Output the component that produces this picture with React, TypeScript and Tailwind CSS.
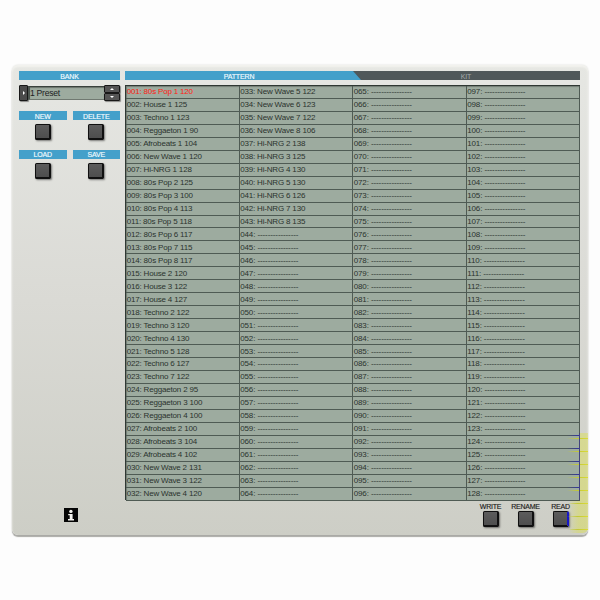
import React from "react";

const EMPTY = "----------------";

const NAMES: string[] = [
  "80s Pop 1 120", "House 1 125", "Techno 1 123", "Reggaeton 1 90", "Afrobeats 1 104", "New Wave 1 120",
  "Hi-NRG 1 128", "80s Pop 2 125", "80s Pop 3 100", "80s Pop 4 113", "80s Pop 5 118", "80s Pop 6 117",
  "80s Pop 7 115", "80s Pop 8 117", "House 2 120", "House 3 122", "House 4 127", "Techno 2 122",
  "Techno 3 120", "Techno 4 130", "Techno 5 128", "Techno 6 127", "Techno 7 122", "Reggaeton 2 95",
  "Reggaeton 3 100", "Reggaeton 4 100", "Afrobeats 2 100", "Afrobeats 3 104", "Afrobeats 4 102",
  "New Wave 2 131", "New Wave 3 122", "New Wave 4 120", "New Wave 5 122", "New Wave 6 123",
  "New Wave 7 122", "New Wave 8 106", "Hi-NRG 2 138", "Hi-NRG 3 125", "Hi-NRG 4 130", "Hi-NRG 5 130",
  "Hi-NRG 6 126", "Hi-NRG 7 130", "Hi-NRG 8 135",
];

function Key({ className = "" }: { className?: string }) {
  return (
    <div
      className={`h-4 w-4 rounded-[1.5px] border border-r-2 border-b-2 border-[#101010] bg-linear-to-b from-[#5c5c5c] to-[#4e4e4e] shadow-[1px_1px_2px_#0007] ${className}`}
    />
  );
}

function Label({ children }: { children: React.ReactNode }) {
  return (
    <div className="flex h-[9px] items-center justify-center bg-[#44a0ca] pt-px text-[7px] leading-none tracking-[-0.15px] text-[#f2fbff] [-webkit-text-stroke:0.15px_#f2fbff]">
      {children}
    </div>
  );
}

function LabeledKey({ label }: { label: string }) {
  return (
    <div className="flex h-[38.5px] flex-col">
      <Label>{label}</Label>
      <Key className="mt-[4px] ml-[15.5px]" />
    </div>
  );
}

function Spinner({ down = false }: { down?: boolean }) {
  return (
    <div className="flex h-[8px] w-[16px] items-center justify-center rounded-[1px] border border-[#181818] bg-[#555] shadow-[1px_1px_1px_#0006]">
      <svg viewBox="0 0 4 2" className={`h-[2px] w-[4px] ${down ? "rotate-180" : ""}`}>
        <path d="M0 2L2 0L4 2Z" fill="#fff" />
      </svg>
    </div>
  );
}

function Sidebar() {
  return (
    <div className="flex w-[101px] flex-col">
      <Label>BANK</Label>
      <div className="mt-[5px] flex h-[16px]">
        <div className="flex h-[16px] w-[9px] items-center justify-center rounded-[1px] border border-[#181818] bg-[#4b4b4b] shadow-[1px_1px_1px_#0006]">
          <svg viewBox="0 0 2 4" className="h-[4px] w-[2px]">
            <path d="M0 0L2 2L0 4Z" fill="#fff" />
          </svg>
        </div>
        <div className="mt-px flex h-[14px] flex-1 items-center border-t border-b border-l-2 border-t-[#39413c] border-b-[#707971] border-l-[#4c554f] bg-[#9dab9f] text-[8.6px] leading-none tracking-[-0.28px] text-[#1c211e] shadow-[inset_0_1px_1px_#0005]">
          <span className="whitespace-pre">1 Preset</span>
        </div>
        <div className="flex flex-col">
          <Spinner />
          <Spinner down />
        </div>
      </div>
      <div className="mt-[10px] grid grid-cols-2 gap-x-[6px]">
        <LabeledKey label="NEW" />
        <LabeledKey label="DELETE" />
        <LabeledKey label="LOAD" />
        <LabeledKey label="SAVE" />
      </div>
      <svg viewBox="0 0 14 14" className="mt-auto mb-[13px] ml-[45px] h-[14px] w-[14px]">
        <rect width="14" height="14" fill="#050505" />
        <circle cx="6.9" cy="3.4" r="1.7" fill="#f4f4f0" />
        <path d="M4.2 6H8.6V11H10V12.4H4V11H5.7V7.2H4.2Z" fill="#f4f4f0" />
      </svg>
    </div>
  );
}

function Tabs() {
  return (
    <div className="flex h-[9px] bg-[#50585a] text-[7px] leading-none tracking-[-0.15px]">
      <div className="flex w-[236px] items-center justify-center bg-[#44a0ca] pt-px pr-[8px] text-[#f2fbff] [-webkit-text-stroke:0.15px_#f2fbff] [clip-path:polygon(0_0,228px_0,236px_100%,0_100%)]">
        PATTERN
      </div>
      <div className="flex flex-1 items-center justify-center pt-px pr-[9px] text-[#a5abab]">KIT</div>
    </div>
  );
}

function PatternTable() {
  const slots = Array.from({ length: 128 }, (_, i) => i);
  return (
    <div className="mt-[5px] grid h-[415px] grid-flow-col grid-cols-4 grid-rows-[repeat(32,12.96px)] border-t border-l border-[#2f3833] bg-[#9dab9f] text-[8px] leading-none shadow-[inset_1px_1px_1px_#0004]">
      {slots.map((i) => (
        <div
          key={i}
          className={`flex items-center border-r border-b border-[#4f5b54] pt-px pl-[0.7px] whitespace-pre ${
            i === 0 ? "text-[#ff1c12]" : "text-[#2b332e]"
          } ${NAMES[i] ? "tracking-[-0.18px]" : "tracking-[-0.11px]"}`}
        >
          {String(i + 1).padStart(3, "0")}: {NAMES[i] ?? EMPTY}
        </div>
      ))}
    </div>
  );
}

function Action({ label, last = false }: { label: string; last?: boolean }) {
  return (
    <div className="flex w-[35px] flex-col items-center text-[7px] leading-none tracking-[-0.25px] text-[#1c1c1c] [-webkit-text-stroke:0.15px_#1c1c1c]">
      <span>{label}</span>
      <Key className={last ? "mt-px border-r-[#1717c8]" : "mt-px"} />
    </div>
  );
}

function Interference() {
  return (
    <div className="pointer-events-none absolute top-[368px] right-0 h-[100px] w-[21px]">
      <div className="absolute top-0 right-0 h-[68px] w-[8px] bg-[#dce04b]/45" />
      <div className="absolute right-0 bottom-0 h-[32px] w-[18px] rounded-br-[5px] bg-linear-to-r from-[#dce04b]/10 via-[#dce04b]/45 to-[#dce04b]/45" />
      {[0, 1, 2, 3, 4].map((n) => (
        <div key={n} className="absolute left-0 h-px w-[13px] bg-linear-to-r from-[#3434a000] to-[#3030a8]" style={{ top: 2 + n * 13 }} />
      ))}
      {[0, 1, 2, 3, 4, 5, 6, 7].map((n) => (
        <div key={n} className="absolute right-0 h-px w-[21px] bg-linear-to-r from-[#c8d02a00] via-[#c2c838] to-[#dcdc34]" style={{ top: 5 + n * 13 }} />
      ))}
      <div className="absolute top-0 left-[12px] h-[67px] w-px bg-[#42427d]" />
    </div>
  );
}

export default function App() {
  return (
    <main className="h-[600px] w-[600px] overflow-hidden bg-[#fdfdfd] px-[12px] pt-[65px] font-['Liberation_Sans',Arial,sans-serif]">
      <section className="relative flex h-[470px] w-[576px] gap-[5px] rounded-[6px] bg-linear-to-b from-[#e6e7e3] via-[#dadad5] to-[#cdcec6] px-[7px] pt-[6px] shadow-[inset_0_2px_2px_#f3f3ef,0_2px_1px_#aaaaa6,0_0_2px_#d8d8d4]">
        <Sidebar />
        <div className="flex w-[455px] flex-col">
          <Tabs />
          <PatternTable />
          <div className="mt-[3px] flex justify-end pr-[2px]">
            <Action label="WRITE" />
            <Action label="RENAME" />
            <Action label="READ" last />
          </div>
        </div>
        <Interference />
      </section>
    </main>
  );
}
